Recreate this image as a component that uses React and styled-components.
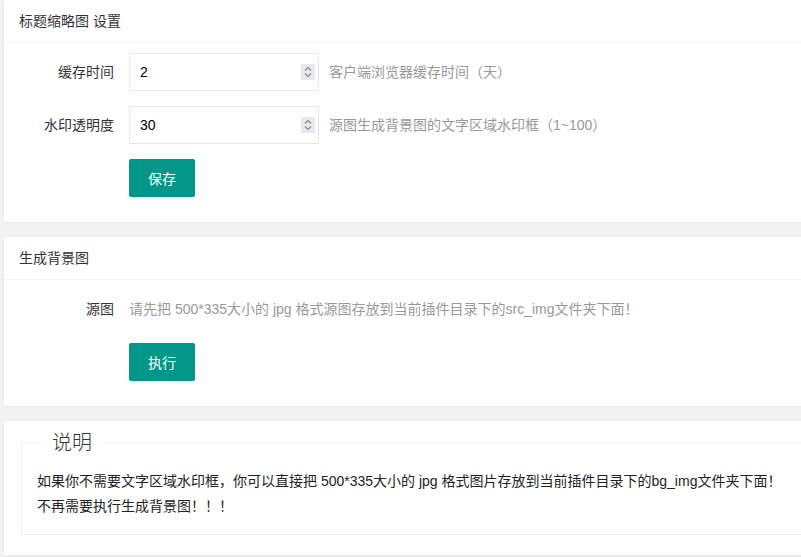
import React from 'react';
import styled, { createGlobalStyle } from 'styled-components';

const GlobalStyle = createGlobalStyle`
  html, body {
    margin: 0;
    padding: 0;
    background: #f2f2f2;
    font-family: "Liberation Sans", "Noto Sans CJK SC", sans-serif;
    font-size: 14px;
    color: #333;
  }
  * {
    box-sizing: border-box;
  }
`;

const Page = styled.div`
  padding: 0 0 3px 4px;
  overflow: hidden;
`;

const Card = styled.div`
  background: #fff;
  border-radius: 2px;
  box-shadow: 0 1px 2px 0 rgba(0, 0, 0, 0.05);
  margin: 0 -40px 15px 0;

  &:last-child {
    margin-bottom: 0;
  }
`;

const CardHeader = styled.div`
  height: 43px;
  line-height: 42px;
  padding: 0 15px;
  border-bottom: 1px solid #f6f6f6;
  color: #333;
  font-size: 14px;
`;

const CardBody = styled.div`
  padding: 10px 15px;
`;

const FormItem = styled.div`
  display: flex;
  align-items: flex-start;
  margin-bottom: 15px;
  padding-left: ${p => (p.$indent ? '110px' : '0')};
`;

const Label = styled.label`
  width: 110px;
  flex: none;
  padding: 9px 15px;
  line-height: 20px;
  text-align: right;
  color: #333;
`;

const InputBox = styled.div`
  width: 190px;
  height: 38px;
  margin-right: 10px;
  display: flex;
  align-items: center;
  border: 1px solid #e6e6e6;
  border-radius: 2px;
  background: #fff;
  padding: 0 3px 0 10px;
`;

const Input = styled.input`
  flex: 1;
  min-width: 0;
  border: none;
  outline: none;
  font: inherit;
  font-size: 14px;
  color: #000;
  padding: 0;
  background: transparent;
`;

const Spinner = styled.span`
  width: 14px;
  height: 16px;
  background: #e9e9ed;
  display: flex;
  flex-direction: column;
  align-items: center;
  justify-content: center;
  gap: 2px;
`;

const Aux = styled.div`
  padding: 9px 0;
  line-height: 20px;
  color: #999;
`;

const Button = styled.button`
  height: 38px;
  line-height: 38px;
  padding: 0 19px;
  border: none;
  border-radius: 2px;
  background: #009688;
  color: #fff;
  font: inherit;
  font-size: 14px;
  cursor: pointer;
`;

const Fieldset = styled.fieldset`
  margin: 0 0 10px 2px;
  padding: 0;
  border: 1px solid #eee;
  border-right: none;
`;

const Legend = styled.legend`
  margin-left: 20px;
  padding: 0 10px;
  font-size: 20px;
  font-weight: 300;
  line-height: 24px;
  color: #333;
`;

const FieldBox = styled.div`
  padding: 14px 15px 15px;
  line-height: 25px;
  color: #222;
`;

const Chevron = ({ up }) => (
  <svg width="8" height="5" viewBox="0 0 8 5">
    <polyline
      points={up ? '1,4.5 4,1.5 7,4.5' : '1,0.5 4,3.5 7,0.5'}
      fill="none"
      stroke="#8a8a8a"
      strokeWidth="1.2"
    />
  </svg>
);

function NumberField({ value }) {
  return (
    <InputBox>
      <Input type="text" defaultValue={value} />
      <Spinner>
        <Chevron up />
        <Chevron />
      </Spinner>
    </InputBox>
  );
}

export default function App() {
  return (
    <Page>
      <GlobalStyle />
      <Card>
        <CardHeader>标题缩略图 设置</CardHeader>
        <CardBody>
          <FormItem>
            <Label>缓存时间</Label>
            <NumberField value="2" />
            <Aux>客户端浏览器缓存时间（天）</Aux>
          </FormItem>
          <FormItem>
            <Label>水印透明度</Label>
            <NumberField value="30" />
            <Aux>源图生成背景图的文字区域水印框（1~100）</Aux>
          </FormItem>
          <FormItem $indent>
            <Button>保存</Button>
          </FormItem>
        </CardBody>
      </Card>

      <Card>
        <CardHeader>生成背景图</CardHeader>
        <CardBody>
          <FormItem>
            <Label>源图</Label>
            <Aux>请先把 500*335大小的 jpg 格式源图存放到当前插件目录下的src_img文件夹下面！</Aux>
          </FormItem>
          <FormItem $indent>
            <Button>执行</Button>
          </FormItem>
        </CardBody>
      </Card>

      <Card>
        <CardBody>
          <Fieldset>
            <Legend>说明</Legend>
            <FieldBox>
              如果你不需要文字区域水印框，你可以直接把 500*335大小的 jpg 格式图片存放到当前插件目录下的bg_img文件夹下面！
              <br />
              不再需要执行生成背景图！！！
            </FieldBox>
          </Fieldset>
        </CardBody>
      </Card>
    </Page>
  );
}
